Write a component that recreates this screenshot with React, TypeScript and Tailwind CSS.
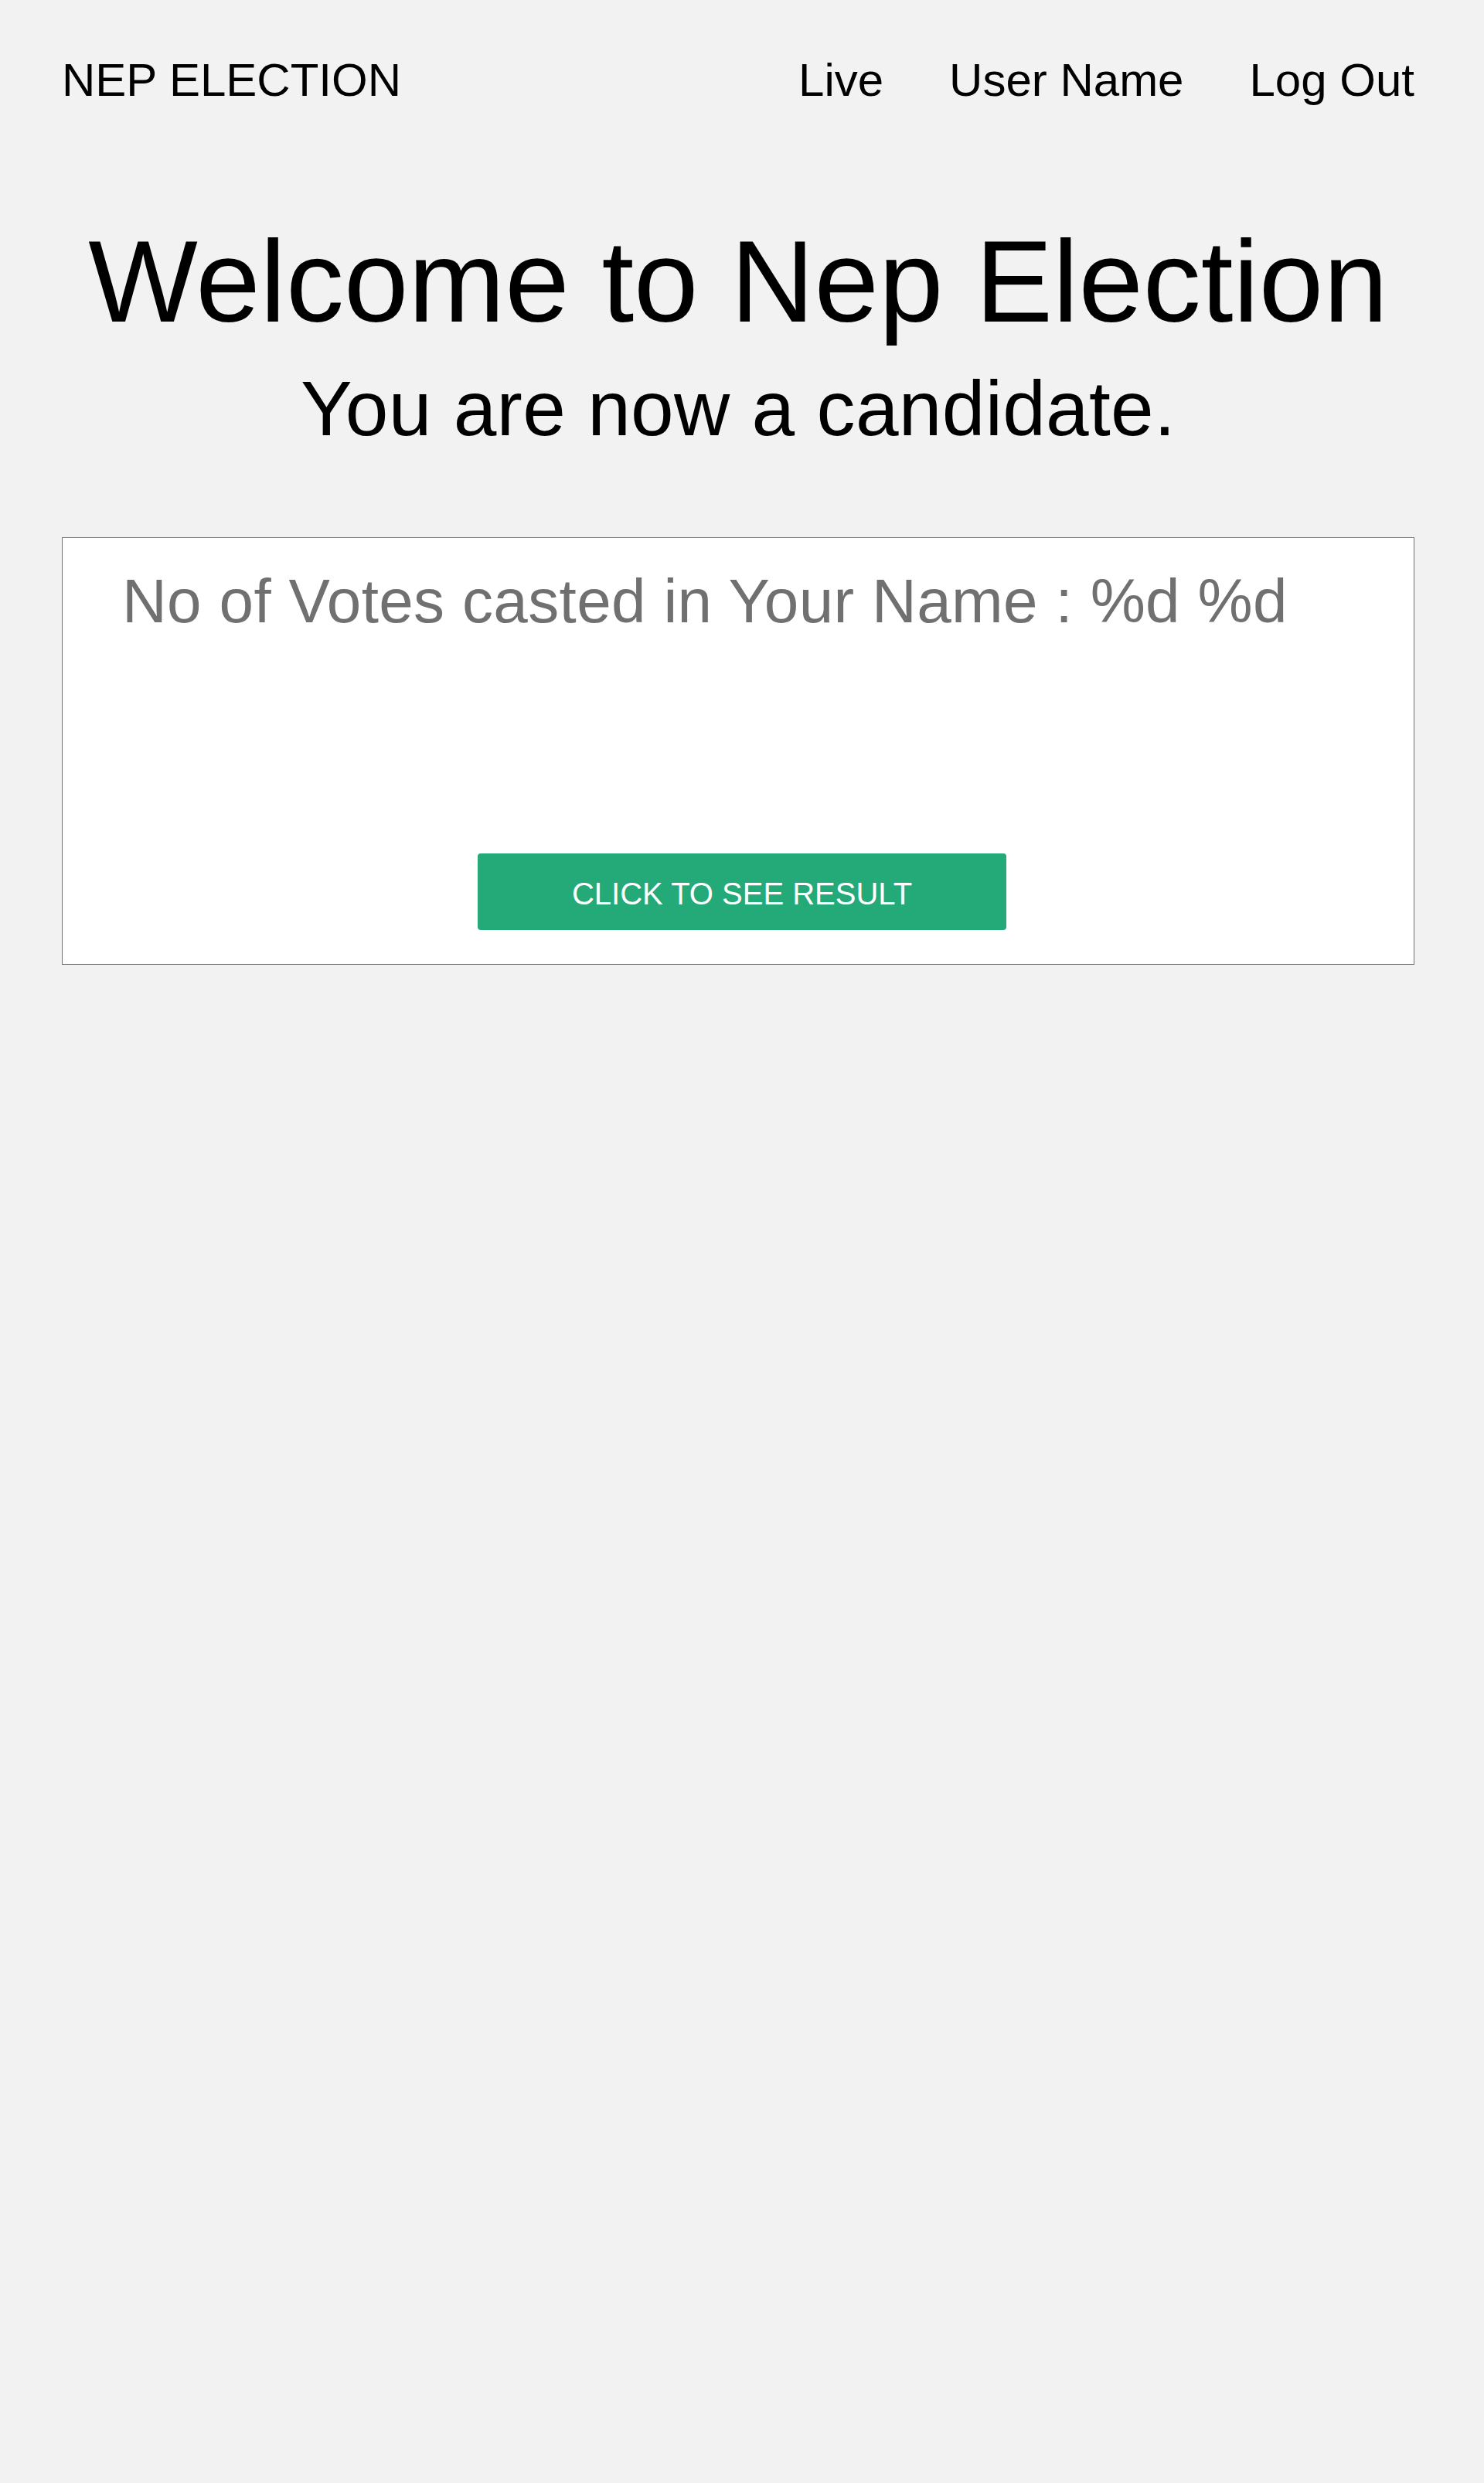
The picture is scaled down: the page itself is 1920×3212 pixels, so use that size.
import React from "react";

export default function App() {
  return (
    <div
      className="min-h-[3212px] w-full bg-[#f2f2f2] text-black"
      style={{ fontFamily: '"Liberation Sans", Arial, sans-serif' }}
    >
      <div className="pl-[80px] pr-[90px]">
        <header className="flex items-start justify-between pt-[69px]">
          <div className="text-[60px] leading-[69px]">NEP ELECTION</div>
          <nav className="flex gap-[85px] text-[60px] leading-[69px]">
            <a className="cursor-pointer">Live</a>
            <a className="cursor-pointer">User Name</a>
            <a className="cursor-pointer">Log Out</a>
          </nav>
        </header>

        <h1 className="mt-[140px] text-center text-[150px] leading-[172px] font-normal">
          Welcome to Nep Election
        </h1>
        <h2 className="mt-[21px] text-center text-[100px] leading-[115px] font-normal tracking-[0.3px]">
          You are now a candidate.
        </h2>

        <section className="mt-[109px] flex flex-col border border-[#707070] bg-white pl-[77px] pt-[36px] pb-[44px]">
          <p className="text-[80px] leading-[92px] text-[#707070] tracking-[0.35px]">
            No of Votes casted in Your Name : %d %d
          </p>
          <div className="mt-[280px] flex">
            <button className="ml-[460px] flex h-[99px] w-[684px] items-center justify-center rounded-[4px] bg-[#24aa78] pt-[5px] text-[40px] text-white">
              CLICK TO SEE RESULT
            </button>
          </div>
        </section>
      </div>
    </div>
  );
}
